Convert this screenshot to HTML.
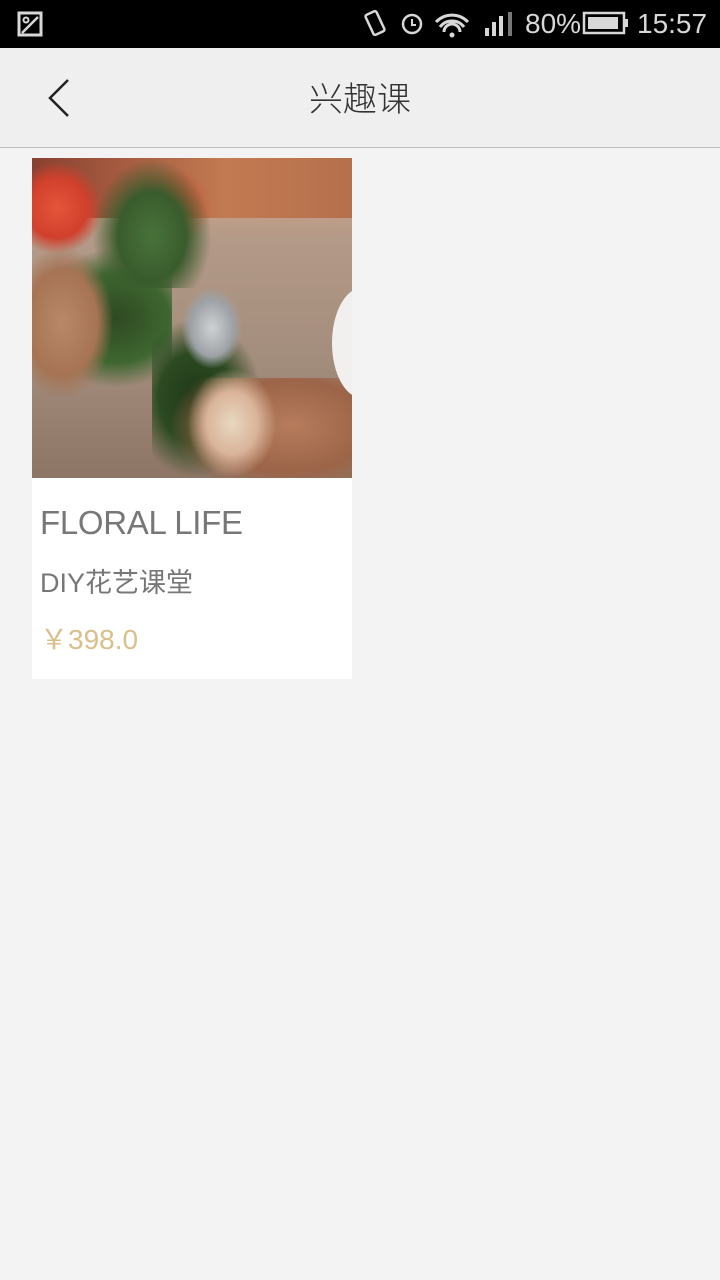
<!DOCTYPE html>
<html><head><meta charset="utf-8"><style>
body{margin:0;width:720px;height:1280px;background:#f3f3f3;font-family:"Liberation Sans","Noto Sans CJK SC",sans-serif;position:relative;overflow:hidden}
.sb{position:absolute;top:0;left:0;width:720px;height:48px;background:#000;color:#d8d8d8}
.nav{position:absolute;top:48px;left:0;width:720px;height:99px;background:#efefef;border-bottom:1px solid #bdbdbd}
.title{position:absolute;top:72px;left:0;width:720px;text-align:center;font-size:34px;color:#333;font-weight:300}
.card{position:absolute;left:32px;top:158px;width:320px;height:521px;background:#fff}
.img{width:320px;height:320px;position:relative;overflow:hidden;background:linear-gradient(180deg,#b9765a 0,#c9a189 40px,#b49a88 80px,#a38d7c 200px,#8d7565 320px)}
.t{position:absolute;left:8px;color:#777}
</style></head><body>
<div class="sb">
<svg width="720" height="48" style="position:absolute;left:0;top:0">
<rect x="19" y="13" width="22" height="22" fill="none" stroke="#d8d8d8" stroke-width="3"/>
<circle cx="26" cy="20" r="2.5" fill="none" stroke="#d8d8d8" stroke-width="2"/>
<path d="M22 33 L38 17" stroke="#d8d8d8" stroke-width="2.5"/>
<rect x="369" y="12" width="12" height="22" rx="2" transform="rotate(-25 375 23)" fill="none" stroke="#d8d8d8" stroke-width="2.5"/>
<circle cx="412" cy="24" r="9" fill="none" stroke="#d8d8d8" stroke-width="2.5"/>
<path d="M412 19v6h4" stroke="#d8d8d8" stroke-width="2" fill="none"/>
<path d="M436 22a22 22 0 0 1 32 0M440 27a15 15 0 0 1 24 0M444 32a8 8 0 0 1 16 0" stroke="#d8d8d8" stroke-width="3" fill="none"/>
<circle cx="452" cy="35" r="2.5" fill="#d8d8d8"/>
<rect x="485" y="28" width="4" height="8" fill="#d8d8d8"/><rect x="492" y="22" width="4" height="14" fill="#d8d8d8"/><rect x="499" y="16" width="4" height="20" fill="#d8d8d8"/><rect x="508" y="12" width="4" height="24" fill="#777"/>
<rect x="584" y="13" width="40" height="20" fill="none" stroke="#d8d8d8" stroke-width="2.5"/>
<rect x="588" y="17" width="30" height="12" fill="#d8d8d8"/><rect x="625" y="19" width="3" height="8" fill="#d8d8d8"/>
</svg>
<div style="position:absolute;left:525px;top:8px;font-size:28px">80%</div>
<div style="position:absolute;left:637px;top:8px;font-size:28px">15:57</div>
</div>
<div class="nav"><svg width="40" height="50" style="position:absolute;left:44px;top:28px"><path d="M24 4 L6 22 L24 40" stroke="#222" stroke-width="2.5" fill="none"/></svg></div>
<div class="title">兴趣课</div>
<div class="card">
<div class="img">
<div style="position:absolute;left:0;top:0;width:320px;height:60px;background:linear-gradient(90deg,#8a4030,#c27a52 60%,#b5704c)"></div>
<div style="position:absolute;left:-10px;top:0;width:90px;height:100px;background:radial-gradient(circle at 35px 50px,#e4553a 0,#d0402c 30px,transparent 46px)"></div>
<div style="position:absolute;left:100px;top:10px;width:90px;height:80px;background:radial-gradient(circle at 40px 40px,#d9462f 0,transparent 40px)"></div>
<div style="position:absolute;left:0;top:90px;width:140px;height:140px;background:radial-gradient(ellipse at 60% 50%,#2f4a22 0,#3e6630 45%,transparent 70%)"></div>
<div style="position:absolute;left:60px;top:0;width:120px;height:130px;background:radial-gradient(ellipse at 50% 60%,#48723a 0,#3a5c2d 40%,transparent 70%)"></div>
<div style="position:absolute;left:120px;top:160px;width:110px;height:160px;background:radial-gradient(ellipse at 40% 50%,#203818 0,#2c4a22 40%,transparent 70%)"></div>
<div style="position:absolute;left:-20px;top:90px;width:100px;height:150px;background:radial-gradient(ellipse,#b88868 0,#a67455 50%,transparent 72%)"></div>
<div style="position:absolute;left:140px;top:220px;width:200px;height:120px;background:radial-gradient(ellipse at 60% 40%,#b67c5c 0,#9c6448 45%,transparent 72%)"></div>
<div style="position:absolute;left:150px;top:130px;width:60px;height:80px;background:radial-gradient(ellipse,#cfd2d4 0,#9ea2a6 50%,transparent 72%)"></div>
<div style="position:absolute;left:155px;top:210px;width:90px;height:110px;background:radial-gradient(ellipse,#e8d8c0 0,#d9b49a 40%,transparent 70%)"></div>
<div style="position:absolute;left:300px;top:130px;width:60px;height:110px;border-radius:50%;background:#f2f0ee"></div>
</div>
<div class="t" style="top:346px;font-size:33px;letter-spacing:-0.3px">FLORAL LIFE</div>
<div class="t" style="top:403px;font-size:27px">DIY花艺课堂</div>
<div class="t" style="top:460px;font-size:28px;color:#d9bf8a">￥398.0</div>
</div>
</body></html>
